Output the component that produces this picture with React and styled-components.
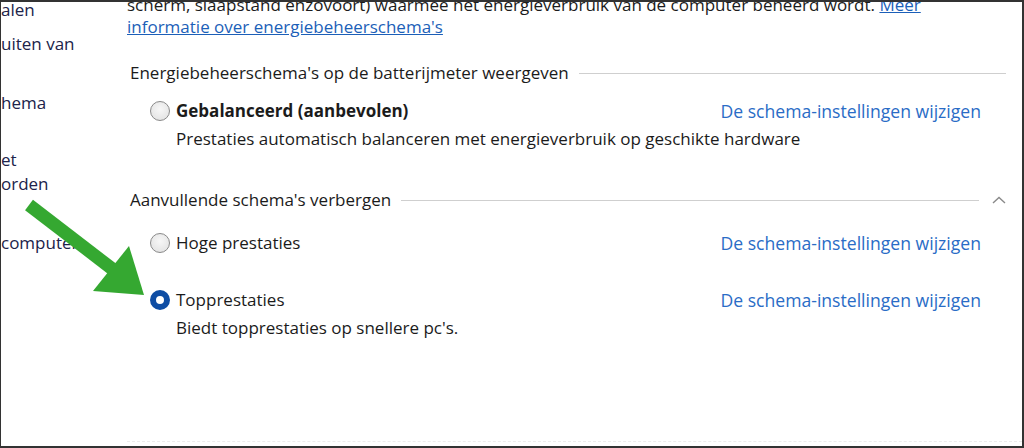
import React from 'react';
import styled, { createGlobalStyle } from 'styled-components';

const GlobalStyle = createGlobalStyle`
  html, body {
    margin: 0;
    padding: 0;
    background: #fff;
    overflow: hidden;
  }
  body {
    font-family: "Open Sans", "Noto Sans", sans-serif;
  }
`;

const Frame = styled.div`
  position: relative;
  width: 1024px;
  height: 448px;
  box-sizing: border-box;
  border: 2px solid #333;
  border-left-width: 1px;
  display: flex;
  overflow: hidden;
  background: #fff;
`;

const Nav = styled.div`
  width: 126px;
  flex: none;
  display: flex;
  flex-direction: column;
  overflow: hidden;
  font-size: 17px;
  line-height: 24px;
  color: #20234a;
`;

const NavItem = styled.div`
  margin-top: ${p => p.$gap}px;
  white-space: nowrap;
`;

const Main = styled.div`
  flex: 1;
  display: flex;
  flex-direction: column;
  padding-right: 16px;
  font-size: 17px;
  line-height: 22px;
  color: #1b1b1b;
  border-bottom: 1px dashed #ececec;
  margin-bottom: 4px;
`;

const Intro = styled.p`
  margin: -8px 0 0;
  white-space: nowrap;
`;

const Link = styled.a`
  color: ${p => (p.$underline ? '#1c5fb8' : '#2a6cc6')};
  font-size: ${p => (p.$underline ? '17px' : '17.6px')};
  text-decoration: ${p => (p.$underline ? 'underline' : 'none')};
  cursor: pointer;
`;

const Heading = styled.div`
  display: flex;
  align-items: center;
  margin-top: ${p => p.$gap}px;
  padding-left: 3px;
  height: 22px;
  white-space: nowrap;
`;

const Rule = styled.div`
  flex: 1;
  height: 1px;
  background: #cfcfcf;
  margin-left: 10px;
`;

const Chevron = styled.span`
  width: 27px;
  display: flex;
  justify-content: flex-end;
  align-items: center;
`;

const Plan = styled.div`
  margin-top: ${p => p.$gap}px;
  padding-left: 23px;
  padding-right: 25px;
`;

const PlanRow = styled.div`
  display: flex;
  align-items: center;
  height: 22px;
  white-space: nowrap;
`;

const Radio = styled.span`
  width: 20px;
  height: 20px;
  box-sizing: border-box;
  border-radius: 50%;
  flex: none;
  margin-right: 6px;
  ${p =>
    p.$checked
      ? `
    border: 6px solid #0e4da4;
    background: #fff;
  `
      : `
    border: 1px solid #8a8a8a;
    background: radial-gradient(circle at 50% 40%, #f7f7f7 0%, #e6e6e6 70%, #d9d9d9 100%);
  `}
`;

const PlanName = styled.span`
  font-weight: ${p => (p.$bold ? 700 : 400)};
  flex: 1;
`;

const PlanDesc = styled.div`
  padding-left: 26px;
  margin-top: 6px;
  white-space: nowrap;
`;

const ArrowLayer = styled.svg`
  position: absolute;
  left: 0;
  top: 0;
  pointer-events: none;
`;

const PlanItem = ({ name, bold, checked, desc, gap }) => (
  <Plan $gap={gap}>
    <PlanRow>
      <Radio $checked={checked} />
      <PlanName $bold={bold}>{name}</PlanName>
      <Link>De schema-instellingen wijzigen</Link>
    </PlanRow>
    {desc && <PlanDesc>{desc}</PlanDesc>}
  </Plan>
);

export default function App() {
  return (
    <>
      <GlobalStyle />
      <Frame>
        <Nav>
          <NavItem $gap={-4}>alen</NavItem>
          <NavItem $gap={10}>uiten van</NavItem>
          <NavItem $gap={35}>hema</NavItem>
          <NavItem $gap={33}>
            et
            <br />
            orden
          </NavItem>
          <NavItem $gap={35}>computer</NavItem>
        </Nav>
        <Main>
          <Intro>
            scherm, slaapstand enzovoort) waarmee het energieverbruik van de computer beheerd wordt.{' '}
            <Link $underline>
              Meer
              <br />
              informatie over energiebeheerschema's
            </Link>
          </Intro>

          <Heading $gap={24}>
            Energiebeheerschema's op de batterijmeter weergeven
            <Rule />
          </Heading>
          <PlanItem
            gap={16}
            bold
            name="Gebalanceerd (aanbevolen)"
            desc="Prestaties automatisch balanceren met energieverbruik op geschikte hardware"
          />

          <Heading $gap={39}>
            Aanvullende schema's verbergen
            <Rule />
            <Chevron>
              <svg width="14" height="8" viewBox="0 0 14 8">
                <polyline points="1,7 7,1.5 13,7" fill="none" stroke="#8a8a8a" strokeWidth="1.4" />
              </svg>
            </Chevron>
          </Heading>
          <PlanItem gap={21} name="Hoge prestaties" />
          <PlanItem gap={35} checked name="Topprestaties" desc="Biedt topprestaties op snellere pc's." />
        </Main>
        <ArrowLayer width="160" height="310" viewBox="0 0 160 310">
          <line x1="28" y1="203" x2="114" y2="269" stroke="#35a831" strokeWidth="13" />
          <polygon points="92,289 128,244 143,293" fill="#35a831" />
        </ArrowLayer>
      </Frame>
    </>
  );
}
